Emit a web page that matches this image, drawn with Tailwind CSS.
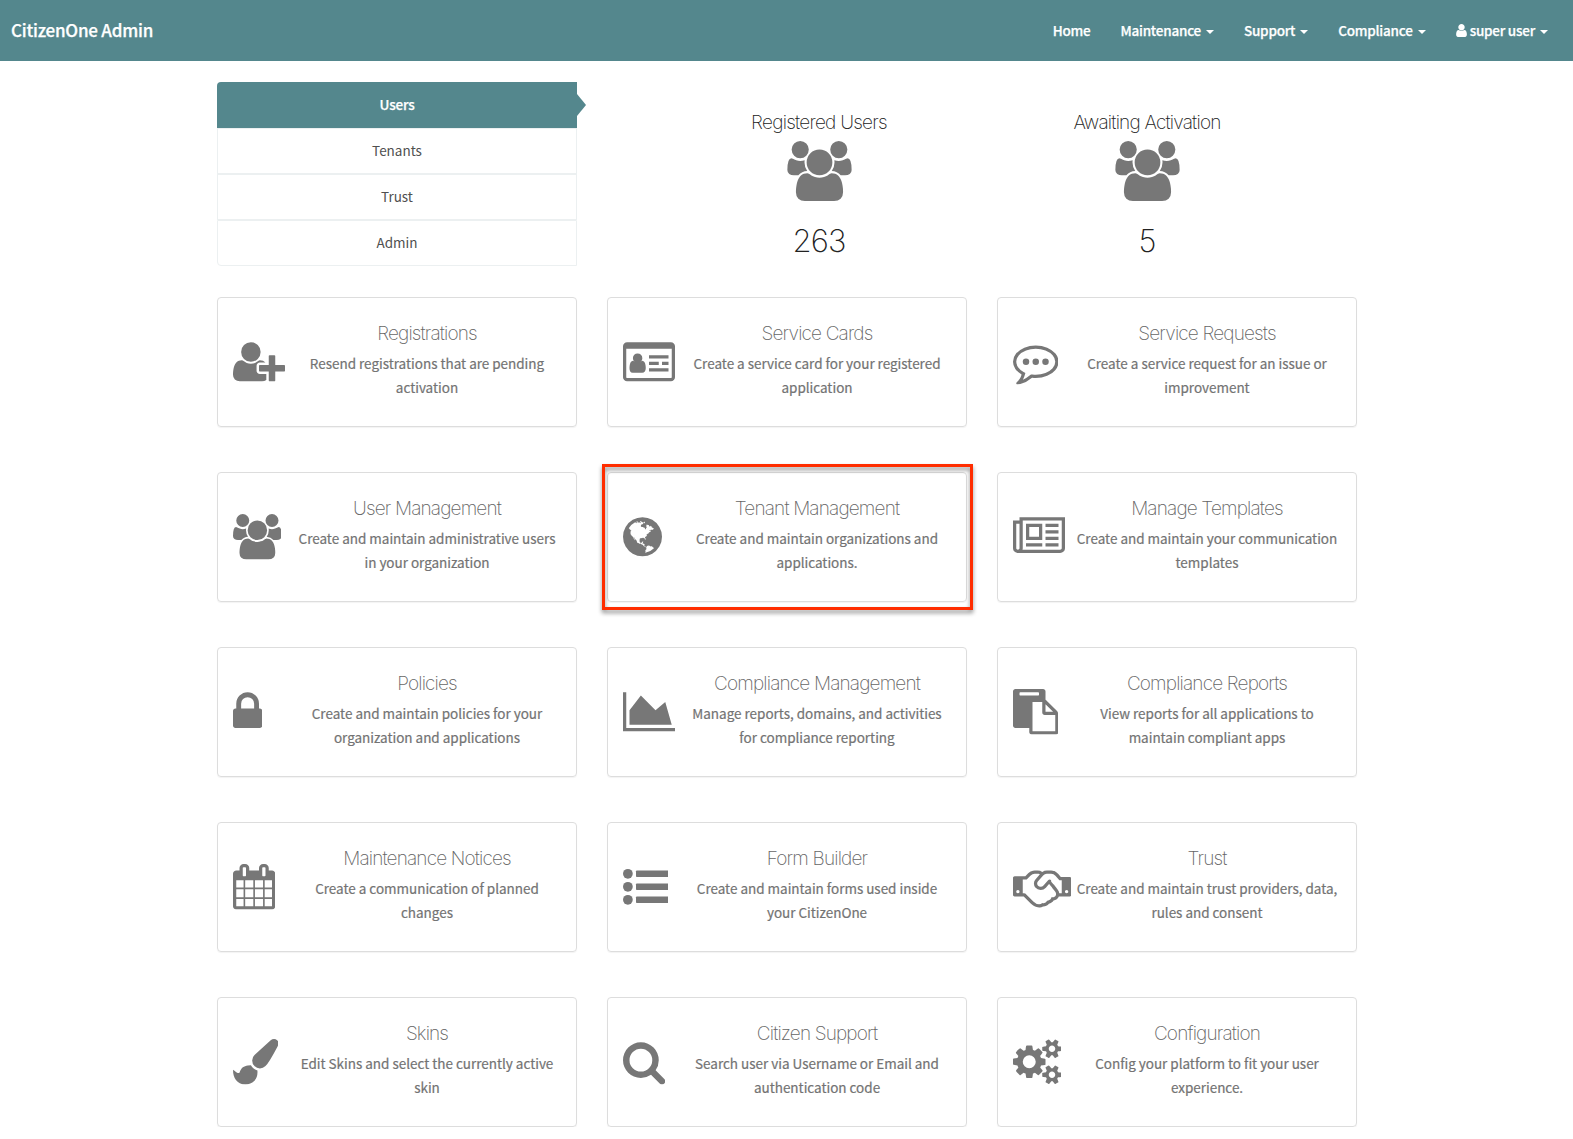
<!DOCTYPE html>
<html lang="en">
<head>
<meta charset="utf-8">
<title>CitizenOne Admin</title>
<script src="https://cdn.jsdelivr.net/npm/@tailwindcss/browser@4"></script>
</head>
<body class="bg-white font-['Noto_Sans_CJK_SC','Open_Sans',sans-serif] text-[13.5px] text-[#737373]">
<svg class="hidden" aria-hidden="true">
<symbol id="users" viewBox="0 0 1920 1792"><path d="M593 896q-162 5-265 128h-134q-82 0-138-40.500t-56-118.500q0-353 124-353 6 0 43.500 21t97.500 42.500 119 21.500q67 0 133-23-5 37-5 66 0 139 81 256zm1071 637q0 120-73 189.500t-194 69.500h-874q-121 0-194-69.500t-73-189.500q0-53 3.500-103.500t14-109 26.500-108.500 43-97.500 62-81 85.500-53.500 111.500-20q10 0 43 21.500t73 48 107 48 135 21.500 135-21.500 107-48 73-48 43-21.500q61 0 111.500 20t85.500 53.500 62 81 43 97.500 26.500 108.500 14 109 3.500 103.500zm-1024-1277q0 106-75 181t-181 75-181-75-75-181 75-181 181-75 181 75 75 181zm704 384q0 159-112.500 271.500t-271.500 112.500-271.500-112.500-112.500-271.500 112.500-271.500 271.500-112.500 271.500 112.500 112.500 271.500zm576 225q0 78-56 118.500t-138 40.500h-134q-103-123-265-128 81-117 81-256 0-29-5-66 66 23 133 23 59 0 119-21.500t97.500-42.500 43.500-21q124 0 124 353zm-128-609q0 106-75 181t-181 75-181-75-75-181 75-181 181-75 181 75 75 181z"/></symbol>
<symbol id="user" viewBox="256 0 1280 1792"><path d="M1536 1399q0 109-62.500 187t-150.500 78h-854q-88 0-150.500-78t-62.500-187q0-85 8.500-160.500t31.500-152 58.500-131 94-89 134.500-34.500q131 128 313 128t313-128q76 0 134.500 34.500t94 89 58.500 131 31.500 152 8.500 160.500zm-256-887q0 159-112.500 271.500t-271.500 112.500-271.500-112.500-112.500-271.500 112.500-271.500 271.500-112.500 271.500 112.500 112.500 271.500z"/></symbol>
<symbol id="user-plus" viewBox="0 0 2048 1792"><path d="M704 896q-159 0-271.500-112.500t-112.500-271.500 112.500-271.500 271.500-112.500 271.500 112.500 112.500 271.500-112.500 271.500-271.500 112.500zm960 128h352q13 0 22.500 9.500t9.500 22.500v192q0 13-9.500 22.500t-22.500 9.500h-352v352q0 13-9.500 22.500t-22.500 9.500h-192q-13 0-22.500-9.500t-9.500-22.500v-352h-352q-13 0-22.500-9.500t-9.500-22.500v-192q0-13 9.500-22.500t22.500-9.500h352v-352q0-13 9.500-22.500t22.500-9.500h192q13 0 22.500 9.500t9.500 22.500v352zm-736 224q0 52 38 90t90 38h256v238q-68 50-171 50h-874q-121 0-194-69t-73-190q0-53 3.500-103.500t14-109 26.500-108.500 43-97.500 62-81 85.500-53.500 111.500-20q19 0 39 17 79 61 154.500 91.500t164.500 30.500 164.500-30.500 154.500-91.500q20-17 39-17 132 0 217 96h-223q-52 0-90 38t-38 90v192z"/></symbol>
<symbol id="id-card" viewBox="0 0 2048 1792"><path fill-rule="evenodd" d="M160 128h1728q66 0 113 47t47 113v1216q0 66-47 113t-113 47h-1728q-66 0-113-47t-47-113v-1216q0-66 47-113t113-47zM128 384v1120q0 13 9.500 22.500t22.500 9.500h1728q13 0 22.500-9.500t9.500-22.500v-1120z"/><path d="M896 1155q0 77-37 127t-104 50h-374q-67 0-96-50t-29-127q0-58 6-106t22-93 46-71 74-26q70 78 172 78t172-78q44 0 74 26t46 71 22 93 6 106zM762 756q0 76-54 131t-132 55-132-55-54-131 54-132 132-54 132 54 54 132zM1024 640h768v128h-768zM1024 896h384v128h-384zM1536 896h256v128h-256zM1024 1152h768v128h-768z"/></symbol>
<symbol id="commenting" viewBox="0 0 1792 1792"><circle cx="512" cy="896" r="128"/><circle cx="896" cy="896" r="128"/><circle cx="1280" cy="896" r="128"/><path fill-rule="evenodd" d="M896 384q-204 0-381.500 69.500t-282 187.500-104.500 255q0 112 71.500 213.500t201.500 175.500l87 50-27 96q-24 91-70 172 152-63 275-171l43-38 57 6q69 8 130 8 204 0 381.500-69.500t282-187.500 104.500-255-104.500-255-282-187.500-381.500-69.500zM1792 896q0 174-120 321.500t-326 233-450 85.500q-70 0-145-8-198 175-460 242-49 14-114 22h-5q-15 0-27-10.500t-16-27.500v-1q-3-4-.5-12t2-10 4.500-9.500l6-9 7-8.500 8-9q7-8 31-34.500t34.500-38 31-39.500 32.500-51 27-59 26-76q-157-89-247.500-220t-90.500-281q0-174 120-321.500t326-233 450-85.500 450 85.500 326 233 120 321.500z"/></symbol>
<symbol id="globe" viewBox="128 0 1536 1792"><path d="M896 128q209 0 385.500 103t279.500 279.500 103 385.500-103 385.500-279.500 279.500-385.500 103-385.500-103-279.500-279.500-103-385.500 103-385.500 279.500-279.500 385.500-103zm274 521q-2 1-9.500 9.500t-13.500 9.500q2 0 4.500-5t5-11 3.500-7q6-7 22-15 14-6 52-12 34-8 51 11-2-2 9.500-13t14.500-12q3-2 15-4.500t15-7.500l2-22q-12 1-17.500-7t-6.500-21q0 2-6 8 0-7-4.500-8t-11.500 1-9 1q-10-3-15-7.500t-8-16.500-4-15q-2-5-9.500-11t-9.500-10q-1-2-2.500-5.500t-3-6.500-4-5.500-5.500-2.500-7 5-7.500 10-4.500 5q-3-2-6-1.500t-4.500 1-4.500 3-5 3.500q-3 2-8.500 3t-8.500 2q15-5-1-11-10-4-16-3 9-4 7.500-12t-8.500-14h5q-1-4-8.500-8.500t-17.500-8.500-13-6q-8-5-34-9.500t-33-.5q-5 6-4.500 10.500t4 14 3.500 12.500q1 6-5.500 13t-6.500 12q0 7 14 15.500t10 21.500q-3 8-16 16t-16 12q-5 8-1.500 18.500t10.500 16.500q2 2 1.500 4t-3.500 4.500-5.500 4-6.500 3.500l-3 2q-11 5-20.500-6t-13.500-26q-7-25-16-30-23-8-29 1-5-13-41-26-25-9-58-4 6-1 0-15-7-15-19-12 3-6 4-17.500t1-13.500q3-13 12-23 1-1 7-8.500t9.500-13.500.5-6q35 4 50-11 5-5 11.500-17t10.500-17q9-6 14-5.500t14.500 5.500 14.500 5q14 1 15.500-11t-7.500-20q12 1 3-17-4-7-8-9-12-4-27 5-8 4 2 8-1-1-9.500 10.500t-16.500 17.500-16-5q-1-1-5.500-13.500t-9.500-13.500q-8 0-16 15 3-8-11-15t-24-8q19-12-8-27-7-4-20.500-5t-19.500 4q-5 7-5.500 11.500t5 8 10.500 5.500 11.500 4 8.500 3q14 10 8 14-2 1-8.500 3.500t-11.500 4.500-6 4q-3 4 0 14t-2 14q-5-5-9-17.500t-7-16.500q7 9-25 6l-10-1q-4 0-16 2t-20.500 1-13.500-8q-4-8 0-20 1-4 4-2-4-3-11-9.500t-10-8.500q-46 15-94 41 6 1 12-1 5-2 13-6.500t10-5.500q34-14 42-7l5-5q14 16 20 25-7-4-30-1-20 6-22 12 7 12 5 18-4-3-11.500-10t-14.500-11-15-5q-16 0-22 1-146 80-235 222 7 7 12 8 4 1 5 9t2.500 11 11.500-3q9 8 3 19 1-1 44 27 19 17 21 21 3 11-10 18-1-2-9-9t-9-4q-3 5 .5 18.500t10.500 12.500q-7 0-9.500 16t-2.500 35.500-1 23.500l2 1q-3 12 5.500 34.500t21.500 19.500q-13 3 20 43 6 8 8 9 3 2 12 7.500t15 10 10 10.500q4 5 10 22.500t14 23.500q-2 6 9.500 20t10.500 23q-1 0-2.500 1t-2.500 1q3 7 15.500 14t15.500 13q1 3 2 10t3 11 8 2q2-20-24-62-15-25-17-29-3-5-5.500-15.500t-4.500-14.500q2 0 6 1.500t8.500 3.500 7.500 4 2 3q-3 7 2 17.500t12 18.500 17 19 12 13q6 6 14 19.500t0 13.500q9 0 20 10t17 20q5 8 8 26t5 24q2 7 8.500 13.500t12.500 9.500l16 8 13 7q5 2 18.500 10.500t21.500 11.500q10 4 16 4t14.500-2.500 13.500-3.500q15-2 29 15t21 21q36 19 55 11-2 1 .5 7.500t8 15.500 9 14.500 5.500 8.500q5 6 18 15t18 15q6-4 7-9-3 8 7 20t18 10q14-3 14-32-31 15-49-18 0-1-2.500-5.500t-4-8.500-2.500-8.500 0-7.500 5-3q9 0 10-3.500t-2-12.500-4-13q-1-8-11-20t-12-15q-5 9-16 8t-16-9q0 1-1.500 5.500t-1.500 6.500q-13 0-15-1 1-3 2.500-17.500t3.500-22.500q1-4 5.500-12t7.500-14.500 4-12.500-4.500-9.500-17.500-2.500q-19 1-26 20-1 3-3 10.500t-5 11.500-9 7q-7 3-24 2t-24-5q-13-8-22.500-29t-9.500-37q0-10 2.500-26.500t3-25-5.500-24.500q3-2 9-9.500t10-10.500q2-1 4.500-1.500t4.500 0 4-1.500 3-6q-1-1-4-3-3-3-4-3 7 3 28.500-1.500t27.500 1.500q15 11 22-2 0-1-2.500-9.500t-.5-13.500q5 27 29 9 3 3 15.500 5t17.500 5q3 2 7 5.500t5.500 4.500 5-.5 8.500-6.500q10 14 12 24 11 40 19 44 7 3 11 2t4.500-9.500 0-14-1.500-12.500l-1-8v-18l-1-8q-15-3-18.500-12t1.500-18.500 15-18.500q1-1 8-3.500t15.500-6.500 12.500-8q21-19 15-35 7 0 11-9-1 0-5-3t-7.500-5-4.500-2q9-5 2-16 5-3 7.500-11t7.500-10q9 12 21 2 8-8 1-16 5-7 20.500-10.500t18.500-9.500q7 2 8-2t1-12 3-12q4-5 15-9t13-5l17-11q3-4 0-4 18 2 31-11 10-11-6-20 3-6-3-9.500t-15-5.500q3-1 11.500-.5t10.500-1.500q15-10-7-16-17-5-43 12zm-163 877q206-36 351-189-3-3-12.500-4.500t-12.500-3.500q-18-7-24-8 1-7-2.500-13t-8-9-12.500-8-11-7q-2-2-7-6t-7-5.500-7.500-4.500-8.500-2-10 1l-3 1q-3 1-5.500 2.500t-5.500 3-4 3 0 2.500q-21-17-36-22-5-1-11-5.500t-10.500-7-10-1.500-11.500 7q-5 5-6 15t-2 13q-7-5 0-17.500t2-18.500q-3-6-10.500-4.500t-12 4.500-11.500 8.500-9 6.500-8.500 5.500-8.500 7.500q-3 4-6 12t-5 11q-2-4-11.500-6.500t-9.500-5.500q2 10 4 35t5 38q7 31-12 48-27 25-29 40-4 22 12 26 0 7-8 20.500t-7 21.500q0 6 2 16z"/></symbol>
<symbol id="newspaper" viewBox="0 0 2048 1792"><path d="M1024 512h-384v384h384v-384zm128 640v128h-640v-128h640zm0-768v640h-640v-640h640zm640 768v128h-512v-128h512zm0-256v128h-512v-128h512zm0-256v128h-512v-128h512zm0-256v128h-512v-128h512zm-1536 960v-960h-128v960q0 26 19 45t45 19 45-19 19-45zm1664 0v-1088h-1536v1088q0 33-11 64h1483q26 0 45-19t19-45zm128-1216v1216q0 80-56 136t-136 56h-1664q-80 0-136-56t-56-136v-1088h256v-128h1792z" fill-rule="evenodd"/></symbol>
<symbol id="lock" viewBox="320 0 1152 1792"><path d="M640 768h512v-192q0-106-75-181t-181-75-181 75-75 181v192zm832 96v576q0 40-28 68t-68 28h-960q-40 0-68-28t-28-68v-576q0-40 28-68t68-28h32v-192q0-184 132-316t316-132 316 132 132 316v192h32q40 0 68 28t28 68z"/></symbol>
<symbol id="area-chart" viewBox="0 0 2048 1792"><path d="M2048 1536v128h-2048v-1536h128v1408h1920zm-384-1024l256 896h-1664v-576l448-576 576 576z"/></symbol>
<symbol id="paste" viewBox="0 0 1792 1792"><path d="M768 1664h896v-640h-416q-40 0-68-28t-28-68v-416h-384v1152zm256-1440v-64q0-13-9.500-22.500t-22.500-9.500h-704q-13 0-22.500 9.500t-9.500 22.500v64q0 13 9.500 22.500t22.500 9.500h704q13 0 22.500-9.500t9.500-22.500zm256 672h299l-299-299v299zm512 128v672q0 40-28 68t-68 28h-960q-40 0-68-28t-28-68v-160h-544q-40 0-68-28t-28-68v-1344q0-40 28-68t68-28h1088q40 0 68 28t28 68v328q21 13 36 28l408 408q28 28 48 76t20 88z"/></symbol>
<symbol id="calendar" viewBox="64 0 1664 1792"><path fill-rule="evenodd" d="M192 1664h288v-288h-288v288zm352 0h320v-288h-320v288zm-352-352h288v-320h-288v320zm352 0h320v-320h-320v320zm-352-384h288v-288h-288v288zm736 736h320v-288h-320v288zm-384-736h320v-288h-320v288zm768 736h288v-288h-288v288zm-384-352h320v-320h-320v320zm-352-864v-288q0-13-9.500-22.500t-22.500-9.500h-64q-13 0-22.500 9.500t-9.500 22.500v288q0 13 9.500 22.500t22.500 9.500h64q13 0 22.500-9.500t9.500-22.500zm736 864h288v-320h-288v320zm-384-384h320v-288h-320v288zm384 0h288v-288h-288v288zm32-480v-288q0-13-9.500-22.500t-22.500-9.500h-64q-13 0-22.500 9.500t-9.500 22.500v288q0 13 9.500 22.500t22.500 9.500h64q13 0 22.500-9.500t9.500-22.500zm384-64v1280q0 52-38 90t-90 38h-1408q-52 0-90-38t-38-90v-1280q0-52 38-90t90-38h128v-96q0-66 47-113t113-47h64q66 0 113 47t47 113v96h384v-96q0-66 47-113t113-47h64q66 0 113 47t47 113v96h128q52 0 90 38t38 90z"/></symbol>
<symbol id="list" viewBox="0 0 1792 1792"><circle cx="192" cy="384" r="192"/><circle cx="192" cy="896" r="192"/><circle cx="192" cy="1408" r="192"/><rect x="512" y="256" width="1280" height="256" rx="32"/><rect x="512" y="768" width="1280" height="256" rx="32"/><rect x="512" y="1280" width="1280" height="256" rx="32"/></symbol>
<symbol id="handshake" viewBox="0 0 2304 1792"><path d="M192 1152q40 0 56-32t0-64-56-32-56 32 0 64 56 32zm1473-58q-10-13-38.500-50t-41.500-54-38-49-42.500-53-40.500-47-45-49l-125 140q-83 94-208.500 92t-205.500-98q-57-69-56.500-158t58.500-157l177-206q-22-11-51-16.500t-47.500-6-56.500.5-49 1q-92 0-158 66l-158 158h-155v544q5 0 21-.5t22 0 19.500 2 20.500 4.500 17.500 8.500 18.500 13.500l297 292q115 111 227 111 78 0 125-47 57 20 112.500-8t72.500-85q74 6 127-44 20-18 36-45.500t14-50.500q10 10 43 10 43 0 77-21t49.500-53 12-71.500-30.500-73.500zm159 58h96v-512h-93l-157-180q-66-76-169-76h-167q-89 0-146 67l-209 243q-28 33-28 75t27 75q43 51 110 52t111-49l193-218q25-23 53.500-21.500t47 27 8.500 56.500q16 19 56 63t60 68q29 36 82.500 105.500t64.500 84.500q52 66 60 140zm288 0q40 0 56-32t0-64-56-32-56 32 0 64 56 32zm192-576v640q0 26-19 45t-45 19h-434q-27 65-82 106.500t-125 51.500q-33 48-80.500 81.500t-102.500 45.500q-42 53-104.500 81.500t-128.500 24.500q-60 34-126 39.500t-127.500-14-117-53.500-103.500-81l-287-282h-358q-26 0-45-19t-19-45v-672q0-26 19-45t45-19h421q14-14 47-48t47.500-48 44-40 50.500-37.500 51-25.500 62-19.500 68-5.500h117q99 0 181 56 82-56 181-56h167q35 0 67 6t56.500 14.500 51.500 26.500 44.500 31 43 39.500 39 42 41 48 41.500 48.500h355q26 0 45 19t19 45z"/></symbol>
<symbol id="brush" viewBox="0 0 1792 1792"><path d="M1615 0q70 0 122.500 46.500t52.500 116.500q0 63-45 151-332 629-465 752-97 91-218 91-126 0-216.500-92.500t-90.500-219.500q0-128 92-212l638-579q59-54 130-54zm-909 1034q39 76 106.500 130t150.500 76l1 71q4 213-129.500 347t-348.500 134q-123 0-218-46.500t-152.500-127.500-86.500-183-29-220q7 5 41 30t62 44.500 59 36.500 46 17q41 0 55-37 25-66 57.500-112.500t69.500-76 88-47.500 103-25.500 125-10.500z"/></symbol>
<symbol id="search" viewBox="64 0 1664 1792"><path d="M1216 832q0-185-131.500-316.500t-316.500-131.500-316.500 131.500-131.500 316.500 131.500 316.500 316.500 131.500 316.500-131.500 131.500-316.500zm512 832q0 52-38 90t-90 38q-54 0-90-38l-343-342q-179 124-399 124-143 0-273.500-55.500t-225-150-150-225-55.500-273.500 55.500-273.500 150-225 225-150 273.500-55.500 273.500 55.500 225 150 150 225 55.500 273.500q0 220-124 399l343 343q37 37 37 90z"/></symbol>
<symbol id="cogs" viewBox="0 0 1920 1792"><path d="M896 896q0-106-75-181t-181-75-181 75-75 181 75 181 181 75 181-75 75-181zm768 512q0-52-38-90t-90-38-90 38-38 90q0 53 37.500 90.500t90.500 37.500 90.500-37.500 37.500-90.500zm0-1024q0-52-38-90t-90-38-90 38-38 90q0 53 37.500 90.500t90.500 37.500 90.500-37.500 37.500-90.500zm-384 421v185q0 10-7 19.500t-16 10.500l-155 24q-11 35-32 76 34 48 90 115 7 11 7 20 0 12-7 19-23 30-82.500 89.500t-78.500 59.500q-11 0-21-7l-115-90q-37 19-77 31-11 108-23 155-7 24-30 24h-186q-11 0-20-7.500t-10-17.500l-23-153q-34-10-75-31l-118 89q-7 7-20 7-11 0-21-8-144-133-144-160 0-9 7-19 10-14 41-53t47-61q-23-44-35-82l-152-24q-10-1-17-9.500t-7-19.500v-185q0-10 7-19.500t16-10.500l155-24q11-35 32-76-34-48-90-115-7-11-7-20 0-12 7-20 22-30 82-89t79-59q11 0 21 7l115 90q34-18 77-32 11-108 23-154 7-24 30-24h186q11 0 20 7.500t10 17.500l23 153q34 10 75 31l118-89q8-7 20-7 11 0 21 8 144 133 144 160 0 8-7 19-12 16-42 54t-45 60q23 48 34 82l152 23q10 2 17 10.500t7 19.500zm640 533v140q0 16-149 31-12 27-30 52 51 113 51 138 0 4-4 7-122 71-124 71-8 0-46-47t-52-68q-20 2-30 2t-30-2q-14 21-52 68t-46 47q-2 0-124-71-4-3-4-7 0-25 51-138-18-25-30-52-149-15-149-31v-140q0-16 149-31 13-29 30-52-51-113-51-138 0-4 4-7 4-2 35-20t59-34 30-16q8 0 46 46.500t52 67.500q20-2 30-2t30 2q51-71 92-112l6-2q4 0 124 70 4 3 4 7 0 25-51 138 17 23 30 52 149 15 149 31zm0-1024v140q0 16-149 31-12 27-30 52 51 113 51 138 0 4-4 7-122 71-124 71-8 0-46-47t-52-68q-20 2-30 2t-30-2q-14 21-52 68t-46 47q-2 0-124-71-4-3-4-7 0-25 51-138-18-25-30-52-149-15-149-31v-140q0-16 149-31 13-29 30-52-51-113-51-138 0-4 4-7 4-2 35-20t59-34 30-16q8 0 46 46.500t52 67.500q20-2 30-2t30 2q51-71 92-112l6-2q4 0 124 70 4 3 4 7 0 25-51 138 17 23 30 52 149 15 149 31z"/></symbol>
</svg>

<header class="flex h-[61px] items-center justify-between bg-[#54878d] pr-[25px] pl-[11px] font-medium tracking-[-0.22px] whitespace-nowrap text-white [-webkit-text-stroke:0.25px]">
  <a class="pb-[2px] text-[17px]">CitizenOne Admin</a>
  <nav class="flex items-center gap-[30px]">
    <a>Home</a>
    <a class="flex items-center gap-[5px]">Maintenance<i class="mt-[3px] border-x-4 border-t-4 border-x-transparent"></i></a>
    <a class="flex items-center gap-[5px]">Support<i class="mt-[3px] border-x-4 border-t-4 border-x-transparent"></i></a>
    <a class="flex items-center gap-[5px]">Compliance<i class="mt-[3px] border-x-4 border-t-4 border-x-transparent"></i></a>
    <a class="flex items-center gap-[5px]"><svg class="-mr-[2px] h-[15px] w-[11px] fill-current"><use href="#user"/></svg>super user<i class="mt-[3px] border-x-4 border-t-4 border-x-transparent"></i></a>
  </nav>
</header>

<main class="mx-auto w-[1140px] pt-[21px]">
  <section class="flex h-[184px]">
    <ul class="w-[360px] text-center leading-[42px] text-[#505050]">
      <li class="relative h-[46px] rounded-tl bg-[#54878d] pl-px leading-[44px] font-medium tracking-[-0.2px] text-white [-webkit-text-stroke:0.25px]">Users<i class="absolute top-[12px] left-full border-y-[11px] border-l-[9px] border-y-transparent border-l-[#54878d]"></i></li>
      <li class="h-[46px] border border-[#ecf0f1] pl-px">Tenants</li>
      <li class="h-[46px] border border-[#ecf0f1] pl-px">Trust</li>
      <li class="h-[46px] rounded-bl border border-[#ecf0f1] pl-px">Admin</li>
    </ul>
    <div class="ml-[78.5px] flex font-['Inter'] font-extralight text-[#222]">
      <div class="flex w-[328px] flex-col items-center">
        <h4 class="mt-[29px] text-[19px] leading-[24px] tracking-[-0.75px]">Registered Users</h4>
        <svg class="mt-[5.5px] h-[60px] w-[65px] fill-[#777]"><use href="#users"/></svg>
        <h2 class="mt-[20.500px] text-[31px] leading-[40px] tracking-[-0.9px]">263</h2>
      </div>
      <div class="flex w-[328px] flex-col items-center">
        <h4 class="mt-[29px] text-[19px] leading-[24px] tracking-[-0.8px]">Awaiting Activation</h4>
        <svg class="mt-[5.5px] h-[60px] w-[65px] fill-[#777]"><use href="#users"/></svg>
        <h2 class="mt-[20.500px] text-[31px] leading-[40px] tracking-[-0.9px]">5</h2>
      </div>
    </div>
  </section>
  <section id="cards" class="mt-[31px] grid grid-cols-3 gap-x-[30px] gap-y-[45px]"></section>
</main>

<script>
const cards = [
  ['user-plus', 52, 'Registrations', 'Resend registrations that are pending', 'activation'],
  ['id-card', 52, 'Service Cards', 'Create a service card for your registered', 'application'],
  ['commenting', 45.5, 'Service Requests', 'Create a service request for an issue or', 'improvement'],
  ['users', 48.75, 'User Management', 'Create and maintain administrative users', 'in your organization'],
  ['globe', 39, 'Tenant Management', 'Create and maintain organizations and', 'applications.', true],
  ['newspaper', 52, 'Manage Templates', 'Create and maintain your communication', 'templates'],
  ['lock', 29.25, 'Policies', 'Create and maintain policies for your', 'organization and applications'],
  ['area-chart', 52, 'Compliance Management', 'Manage reports, domains, and activities', 'for compliance reporting'],
  ['paste', 45.5, 'Compliance Reports', 'View reports for all applications to', 'maintain compliant apps'],
  ['calendar', 42.25, 'Maintenance Notices', 'Create a communication of planned', 'changes'],
  ['list', 45.5, 'Form Builder', 'Create and maintain forms used inside', 'your CitizenOne'],
  ['handshake', 58.5, 'Trust', 'Create and maintain trust providers, data,', 'rules and consent'],
  ['brush', 45.5, 'Skins', 'Edit Skins and select the currently active', 'skin'],
  ['search', 42.25, 'Citizen Support', 'Search user via Username or Email and', 'authentication code'],
  ['cogs', 48.75, 'Configuration', 'Config your platform to fit your user', 'experience.'],
];
document.getElementById('cards').innerHTML = cards.map(([icon, width, title, line1, line2, marked]) => `
  <article class="relative flex h-[130px] rounded border border-[#ddd] pl-[15px] shadow-[0_1px_1px_rgba(0,0,0,0.05)]">
    <div class="w-[60.5px] shrink-0 pt-[41px]"><svg class="h-[45.5px] fill-[#777]" style="width:${width}px"><use href="#${icon}"/></svg></div>
    <div class="w-[268px] shrink-0 pt-[24px] text-center whitespace-nowrap">
      <h4 class="font-['Inter'] text-[19px] leading-[24px] font-extralight tracking-[-0.85px] text-[#666]">${title}</h4>
      <p class="mt-[5px] leading-[24px] tracking-[-0.02px] [-webkit-text-stroke:0.2px]">${line1}<br>${line2}</p>
    </div>
    ${marked ? '<div class="absolute -top-[9px] -left-[6px] h-[146px] w-[371px] border-[3px] border-[#ff2d00] drop-shadow-[0_3px_2px_rgba(0,0,0,0.45)]"></div>' : ''}
  </article>`).join('');
</script>
</body>
</html>
